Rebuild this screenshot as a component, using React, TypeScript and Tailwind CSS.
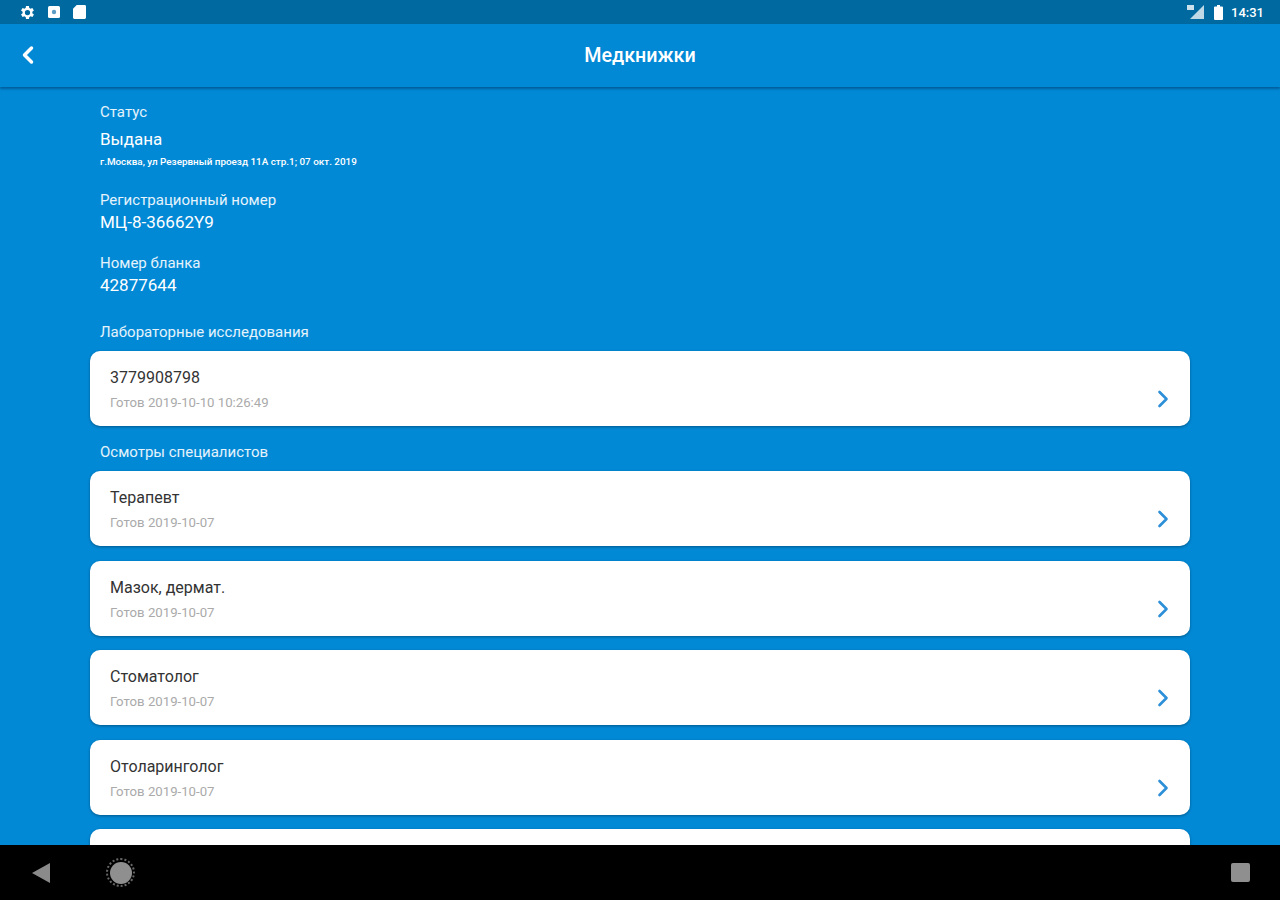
import { ChevronLeft, ChevronRight } from 'lucide-react';

const specialists = [
  { title: 'Терапевт', sub: 'Готов 2019-10-07' },
  { title: 'Мазок, дермат.', sub: 'Готов 2019-10-07' },
  { title: 'Стоматолог', sub: 'Готов 2019-10-07' },
  { title: 'Отоларинголог', sub: 'Готов 2019-10-07' },
];

function Card({ title, sub }: { title: string; sub?: string }) {
  return (
    <div className="relative h-[75px] shrink-0 rounded-[10px] bg-white pl-5 pt-[17px] shadow-[0_1px_3px_rgba(0,0,0,0.35)]">
      <div className="h-[20px] text-[16px] leading-[20px] text-[#333]">{title}</div>
      <div className="mt-[8px] text-[13.2px] leading-[14px] text-[#aaa]">{sub}</div>
      <ChevronRight className="absolute right-[13px] top-[34px] h-[28px] w-[28px] text-[#2d8fd8]" strokeWidth={2.25} />
    </div>
  );
}

function Field({ label, value }: { label: string; value: string }) {
  return (
    <div>
      <div className="text-[15px] leading-[18px] text-white/90">{label}</div>
      <div className="mt-[2px] text-[17px] leading-[22px] text-white">{value}</div>
    </div>
  );
}

export default function App() {
  return (
    <div className="flex h-[900px] w-[1280px] flex-col overflow-hidden bg-[#0289d6] font-['Roboto',sans-serif]">
      {/* Status bar */}
      <div className="flex h-6 shrink-0 items-center justify-between bg-[#00699f] pl-5 pr-4 text-white">
        <div className="flex items-center">
          <svg width="15" height="15" viewBox="3 2 20 20" fill="white">
            <path d="M19.4 13a7.5 7.5 0 0 0 0-2l2.1-1.6-2-3.5-2.5 1a7.5 7.5 0 0 0-1.7-1L15 3.2h-4l-.4 2.7a7.5 7.5 0 0 0-1.7 1l-2.5-1-2 3.5L6.5 11a7.5 7.5 0 0 0 0 2l-2.1 1.6 2 3.5 2.5-1a7.5 7.5 0 0 0 1.7 1l.4 2.7h4l.4-2.7a7.5 7.5 0 0 0 1.7-1l2.5 1 2-3.5zM13 15.5a3.5 3.5 0 1 1 0-7 3.5 3.5 0 0 1 0 7z" />
          </svg>
          <svg className="ml-[13px]" width="12" height="12" viewBox="0 0 12 12">
            <rect width="12" height="12" rx="1.5" fill="white" />
            <circle cx="6" cy="6" r="2.2" fill="#5d9cc4" />
          </svg>
          <svg className="ml-[13px]" width="13" height="14" viewBox="0 0 14 15" fill="white">
            <path d="M4 0h8.5A1.5 1.5 0 0 1 14 1.5v12a1.5 1.5 0 0 1-1.5 1.5h-11A1.5 1.5 0 0 1 0 13.5V4z" />
          </svg>
        </div>
        <div className="flex items-center">
          <svg width="17" height="14" viewBox="0 0 17 14">
            <path d="M17 0v14H3z" fill="white" opacity="0.75" />
            <rect x="0" y="0" width="7" height="5" fill="white" opacity="0.8" />
          </svg>
          <svg className="ml-[10px]" width="9" height="15" viewBox="0 0 9 15" fill="white">
            <path d="M3 0h3v1.5h2a1 1 0 0 1 1 1V14a1 1 0 0 1-1 1H1a1 1 0 0 1-1-1V2.5a1 1 0 0 1 1-1h2z" />
          </svg>
          <span className="ml-[8px] text-[13px] font-medium leading-none">14:31</span>
        </div>
      </div>

      {/* App bar */}
      <div className="relative flex h-[63px] shrink-0 items-center justify-center pt-[1px] shadow-[0_2px_2px_rgba(0,60,110,0.55)]">
        <ChevronLeft className="absolute left-[14px] top-[17px] h-7 w-7 text-white" strokeWidth={3} />
        <h1 className="text-[19.7px] font-medium text-white">Медкнижки</h1>
      </div>

      {/* Content */}
      <div className="min-h-0 flex-1 overflow-hidden px-[90px]">
        <div className="pl-[10px] pt-4">
          <div className="text-[15px] leading-[18px] text-white/90">Статус</div>
          <div className="mt-[7px] text-[17px] leading-[22px] text-white">Выдана</div>
          <div className="mt-[6px] text-[9.9px] font-medium leading-[12px] text-white">
            г.Москва, ул Резервный проезд 11А стр.1; 07 окт. 2019
          </div>
          <div className="mt-[23px]">
            <Field label="Регистрационный номер" value="МЦ-8-36662Y9" />
          </div>
          <div className="mt-[21px]">
            <Field label="Номер бланка" value="42877644" />
          </div>
          <div className="mt-[27px] text-[15px] leading-[18px] text-white/90">Лабораторные исследования</div>
        </div>
        <div className="mt-[10px]">
          <Card title="3779908798" sub="Готов 2019-10-10 10:26:49" />
        </div>
        <div className="mt-[17px] pl-[10px] text-[15px] leading-[18px] text-white/90">Осмотры специалистов</div>
        <div className="mt-[10px] flex flex-col gap-[14.5px]">
          {specialists.map((s) => (
            <Card key={s.title} title={s.title} sub={s.sub} />
          ))}
          <Card title="" sub="" />
        </div>
      </div>

      {/* Navigation bar */}
      <div className="flex h-[55px] shrink-0 items-center justify-between bg-black pl-8 pr-[30px]">
        <div className="flex items-center gap-[56px]">
          <svg width="18" height="20" viewBox="0 0 18 20">
            <path d="M18 0v20L0 10z" fill="#8a8a8a" />
          </svg>
          <div className="flex h-[29px] w-[29px] items-center justify-center rounded-full border-2 border-dotted border-[#666]">
            <div className="h-[22px] w-[22px] rounded-full bg-[#8f8f8f]" />
          </div>
        </div>
        <div className="h-[19px] w-[19px] rounded-[2px] bg-[#8f8f8f]" />
      </div>
    </div>
  );
}
